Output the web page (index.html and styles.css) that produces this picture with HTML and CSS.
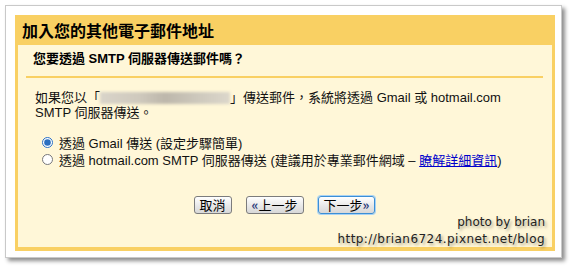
FILE: index.html
```html
<!DOCTYPE html>
<html lang="zh-Hant">
<head>
<meta charset="utf-8">
<title>加入您的其他電子郵件地址</title>
<link rel="stylesheet" href="styles.css">
</head>
<body>
<div class="frame">
  <div class="box">
    <div class="hdr">加入您的其他電子郵件地址</div>
    <div class="inner">
      <div class="sub">您要透過 SMTP 伺服器傳送郵件嗎？</div>
      <p class="desc">如果您以「<span class="blur"></span>」傳送郵件，系統將透過 Gmail 或 hotmail.com<br>SMTP 伺服器傳送。</p>
      <div class="opts">
        <label class="opt"><input type="radio" name="m" checked><span>透過 Gmail 傳送 (設定步驟簡單)</span></label>
        <label class="opt"><input type="radio" name="m"><span>透過 hotmail.com SMTP 伺服器傳送 (建議用於專業郵件網域 – <a href="#" class="link">瞭解詳細資訊</a>)</span></label>
      </div>
      <div class="btns">
        <button class="btn">取消</button>
        <button class="btn"><b class="q">«</b>上一步</button>
        <button class="btn focus">下一步<b class="q">»</b></button>
      </div>
    </div>
  </div>
  <div class="wm">
    <div>photo by brian</div>
    <div class="url">http://brian6724.pixnet.net/blog</div>
  </div>
</div>
</body>
</html>
```
FILE: styles.css
```css
html, body {
  margin: 0;
  padding: 0;
  background: #ffffff;
}
body {
  font-family: "Liberation Sans", Arial, "Noto Sans CJK TC", sans-serif;
  color: #111;
  width: 570px;
  height: 266px;
  overflow: hidden;
}
.frame {
  position: relative;
  margin: 5px 0 0 5px;
  width: 557px;
  height: 253px;
  box-sizing: border-box;
  background: #fff;
  border: 1px solid #c9c9c9;
  box-shadow: 3px 3px 4px rgba(0, 0, 0, 0.45);
  padding: 9px 6px 6px 9px;
}
.box {
  height: 100%;
  box-sizing: border-box;
  background: #f9d063;
  padding: 0 3px 4px 3px;
  display: flex;
  flex-direction: column;
}
.hdr {
  height: 30px;
  display: flex;
  align-items: center;
  padding-left: 4px;
  font-family: "Noto Sans CJK TC", sans-serif;
  font-size: 16px;
  font-weight: bold;
  color: #000;
}
.inner {
  flex: 1;
  background: #fff7d8;
  padding: 0 9px 0 8px;
}
.sub {
  padding: 6px 0 9px 7px;
  line-height: 16px;
  font-size: 13px;
  font-weight: bold;
  color: #000;
  border-bottom: 2px solid #f9d063;
}
.desc {
  margin: 12px 0 0 0;
  padding-left: 9px;
  font-size: 13px;
  line-height: 15px;
}
.blur {
  display: inline-block;
  width: 130px;
  height: 12px;
  vertical-align: -2px;
  background: linear-gradient(90deg, #d9d4c9 0%, #cfc9bd 30%, #bdb7ab 50%, #cdc8bc 75%, #dcd7cb 100%);
  filter: blur(1.5px);
}
.opts {
  margin-top: 14px;
  display: flex;
  flex-direction: column;
}
.opt {
  display: flex;
  align-items: center;
  height: 17px;
  font-size: 13px;
  padding-left: 16px;
}
.opt input {
  width: 11px;
  height: 11px;
  margin: 0 6px 0 0;
  accent-color: #2a6fc0;
}
.link {
  color: #0000cc;
  text-decoration: underline;
}
.btns {
  margin-top: 28px;
  display: flex;
  justify-content: center;
  gap: 14px;
}
.btn {
  height: 18px;
  padding: 0 5px;
  font-family: "Noto Sans CJK TC", sans-serif;
  font-size: 13px;
  line-height: 16px;
  color: #000;
  background: linear-gradient(#ffffff, #e6e6e6 60%, #d8d8d8);
  border: 1px solid #7c7c7c;
  border-radius: 3px;
}
.btn.focus {
  border-color: #3b8fd6;
  box-shadow: 0 0 0 1px #a9d2f3;
}
.q {
  color: #2a3a7a;
}
.wm {
  position: absolute;
  right: 16px;
  top: 208px;
  text-align: right;
  font-family: "DejaVu Sans", sans-serif;
  font-size: 12px;
  line-height: 17px;
  color: #222;
  text-shadow: 2px 2px 3px rgba(0, 0, 0, 0.35);
}
.url {
  letter-spacing: 0.45px;
}
```
